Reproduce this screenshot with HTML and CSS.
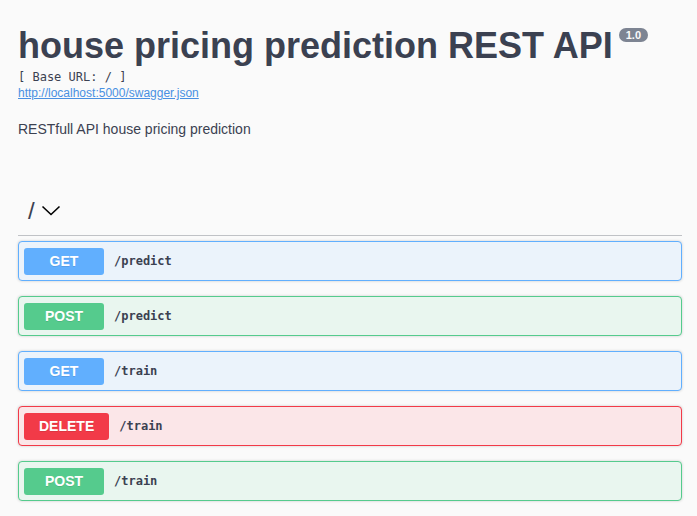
FILE: index.html
```html
<!DOCTYPE html>
<html>
<head>
<meta charset="utf-8">
<link rel="stylesheet" href="styles.css">
</head>
<body>
<div class="wrapper">
  <div class="info">
    <h2 class="title">house pricing prediction REST API<small class="version">1.0</small></h2>
    <pre class="base-url">[ Base URL: / ]</pre>
    <a class="spec-link" href="#">http://localhost:5000/swagger.json</a>
    <p class="description">RESTfull API house pricing prediction</p>
  </div>
  <div class="tag">
    <h4 class="tag-title"><span class="tag-name">/</span>
      <svg class="chevron" width="20" height="20" viewBox="0 0 20 20"><path d="M1.5 5.5 L10 13.5 L18.5 5.5" fill="none" stroke="#000" stroke-width="1.6"/></svg>
    </h4>
  </div>
  <div class="ops">
    <div class="opblock get"><span class="method">GET</span><span class="path">/predict</span></div>
    <div class="opblock post"><span class="method">POST</span><span class="path">/predict</span></div>
    <div class="opblock get"><span class="method">GET</span><span class="path">/train</span></div>
    <div class="opblock delete"><span class="method">DELETE</span><span class="path">/train</span></div>
    <div class="opblock post"><span class="method">POST</span><span class="path">/train</span></div>
  </div>
</div>
</body>
</html>
```
FILE: styles.css
```css
html, body {
  margin: 0;
  padding: 0;
  background: #fafafa;
}
body {
  font-family: "Liberation Sans", Arial, sans-serif;
  color: #3b4151;
}
.wrapper {
  padding: 23px 15px 0 18px;
}
.title {
  margin: 0;
  font-size: 36px;
  font-weight: 700;
  line-height: 45px;
  color: #3b4151;
}
.version {
  display: inline-block;
  position: relative;
  top: -6px;
  vertical-align: super;
  margin-left: 6px;
  padding: 1px 7px;
  border-radius: 57px;
  background: #7d8492;
  color: #fafafa;
  font-size: 11px;
  font-weight: 700;
  line-height: 12px;
}
.base-url {
  margin: 0;
  font-family: "DejaVu Sans Mono", monospace;
  font-size: 12px;
  line-height: 18px;
  color: #3b4151;
}
.spec-link {
  display: block;
  font-size: 12px;
  line-height: 14px;
  color: #4990e2;
  text-decoration: underline;
}
.description {
  margin: 19px 0 0;
  font-size: 14px;
  line-height: 20px;
  color: #3b4151;
}
.tag {
  margin-top: 51px;
}
.tag-title {
  display: flex;
  align-items: center;
  margin: 0;
  padding: 9px 0 12px 10px;
  border-bottom: 1px solid rgba(59,65,81,.3);
  font-size: 24px;
  font-weight: 400;
  line-height: 24px;
  color: #3b4151;
}
.tag-name {
  font-style: normal;
}
.chevron {
  margin-left: 6px;
  margin-top: 0;
}
.ops {
  padding-top: 5px;
}
.opblock {
  display: flex;
  align-items: center;
  height: 38px;
  padding: 0 5px;
  margin-bottom: 15px;
  border: 1px solid;
  border-radius: 4px;
  box-shadow: 0 0 3px rgba(0,0,0,.19);
}
.method {
  min-width: 80px;
  box-sizing: border-box;
  padding: 6px 15px;
  border-radius: 3px;
  text-align: center;
  color: #fff;
  font-size: 14px;
  font-weight: 700;
  line-height: 15px;
  text-shadow: 0 1px 0 rgba(0,0,0,.1);
}
.path {
  padding: 0 10px;
  font-family: "DejaVu Sans Mono", monospace;
  font-size: 12px;
  font-weight: 700;
  color: #3b4151;
}
.get { background: #ebf3fb; border-color: #61affe; }
.get .method { background: #61affe; }
.post { background: #e9f6ef; border-color: #55cb8d; }
.post .method { background: #55cb8d; }
.delete { background: #fbe6e8; border-color: #f23a48; }
.delete .method { background: #f23a48; }
```
